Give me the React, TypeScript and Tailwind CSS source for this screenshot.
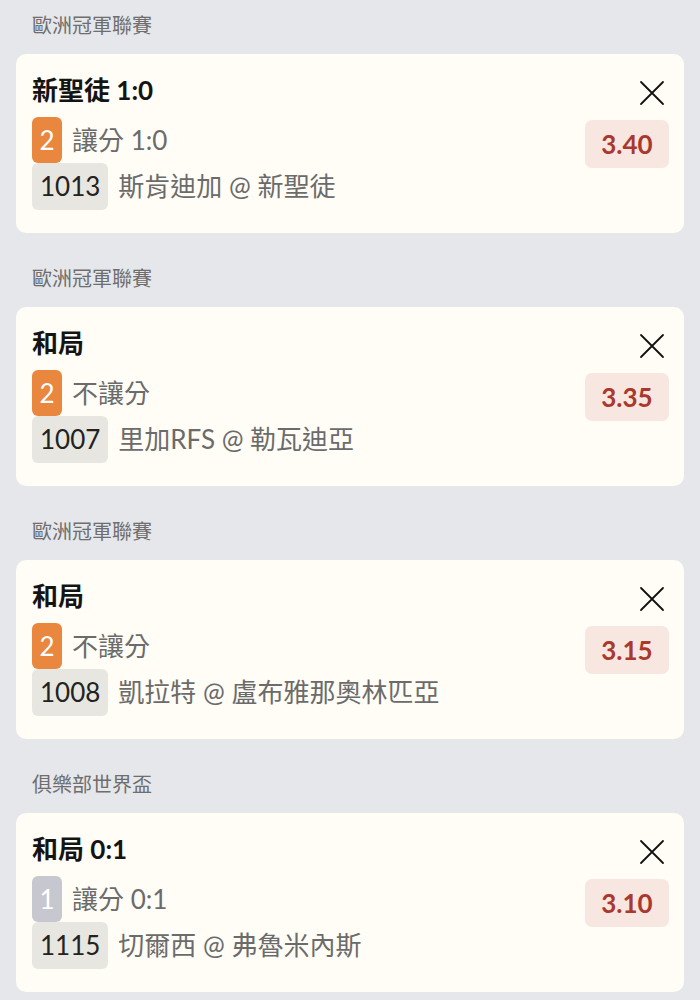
import React from "react";

type Bet = {
  league: string;
  title: string;
  num: string;
  numActive: boolean;
  market: string;
  id: string;
  match: string;
  odds: string;
};

const bets: Bet[] = [
  { league: "歐洲冠軍聯賽", title: "新聖徒 1:0", num: "2", numActive: true, market: "讓分 1:0", id: "1013", match: "斯肯迪加 @ 新聖徒", odds: "3.40" },
  { league: "歐洲冠軍聯賽", title: "和局", num: "2", numActive: true, market: "不讓分", id: "1007", match: "里加RFS @ 勒瓦迪亞", odds: "3.35" },
  { league: "歐洲冠軍聯賽", title: "和局", num: "2", numActive: true, market: "不讓分", id: "1008", match: "凱拉特 @ 盧布雅那奧林匹亞", odds: "3.15" },
  { league: "俱樂部世界盃", title: "和局 0:1", num: "1", numActive: false, market: "讓分 0:1", id: "1115", match: "切爾西 @ 弗魯米內斯", odds: "3.10" },
];

const font = { fontFamily: 'Lato, "Noto Sans CJK TC", sans-serif' };

function Close() {
  return (
    <svg width="26" height="26" viewBox="0 0 26 26" fill="none" stroke="#111" strokeWidth="1.8" strokeLinecap="round">
      <path d="M2 2 L24 24 M24 2 L2 24" />
    </svg>
  );
}

export default function App() {
  return (
    <div className="min-h-[1000px] w-[700px] bg-[#e6e7eb]" style={font}>
      {bets.map((b, i) => (
        <div key={i} className="mb-[20px]">
          <div className="h-[54px] pl-[32px] pt-[11px] text-[20px] leading-[28px] text-[#6e6e6e]">{b.league}</div>
          <div className="mx-[16px] flex h-[179px] rounded-[10px] bg-[#fffdf6] pl-[16px] pr-[15px] pt-[20px]">
            <div className="flex flex-1 flex-col">
              <div className="h-[32px] text-[26px] font-bold leading-[32px] text-[#141414]">{b.title}</div>
              <div className="mt-[11px] flex h-[46px] items-center">
                <span
                  className={`flex h-[46px] w-[30px] items-center justify-center rounded-[6px] text-[26px] text-white ${b.numActive ? "bg-[#e9873f]" : "bg-[#c7c7d0]"}`}
                >
                  {b.num}
                </span>
                <span className="ml-[10px] text-[26px] text-[#6b6b6b]">{b.market}</span>
              </div>
              <div className="flex h-[47px] items-center">
                <span className="flex h-[47px] items-center rounded-[6px] bg-[#e7e6e0] px-[8px] text-[26px] text-[#222]">{b.id}</span>
                <span className="ml-[10px] text-[26px] text-[#6b6b6b]">{b.match}</span>
              </div>
            </div>
            <div className="flex flex-col items-end">
              <div className="mr-[4px] mt-[3px] flex h-[32px] items-center">
                <Close />
              </div>
              <div className="mt-[11px] flex h-[48px] w-[84px] items-center justify-center rounded-[7px] bg-[#f8e6e1] text-[26px] font-bold text-[#a9392d]">
                {b.odds}
              </div>
            </div>
          </div>
        </div>
      ))}
    </div>
  );
}
